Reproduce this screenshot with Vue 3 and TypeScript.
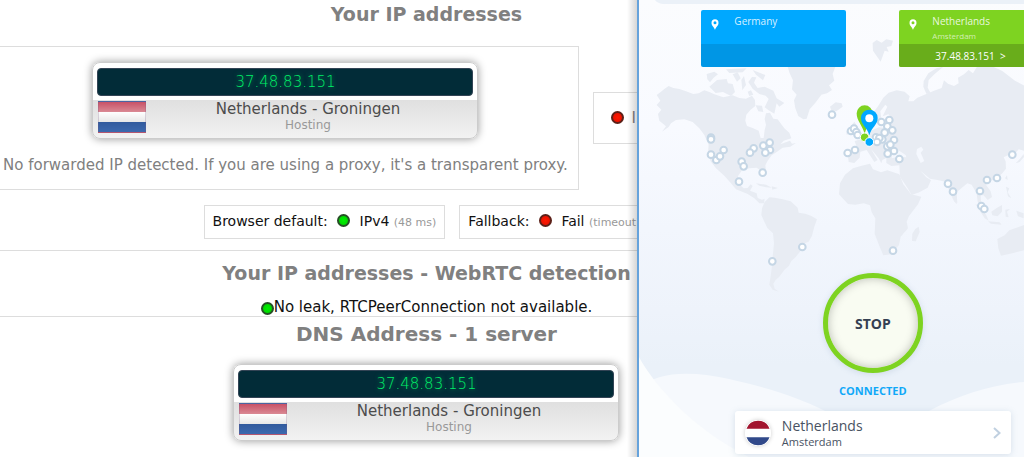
<script setup lang="ts">
interface Point { x: number; y: number }

const address = '37.48.83.151'

const toPoints = (pairs: number[][]): Point[] => pairs.map(([x, y]) => ({ x, y }))

const westServers = toPoints([
  [225, 233], [225, 238], [263, 270], [241, 300], [252, 289], [225, 284], [317, 305], [323, 319],
  [353, 265], [342, 278], [382, 257], [401, 248], [402, 270], [388, 278], [380, 338], [309, 365],
  [499, 561], [409, 604],
])

const eastServers = toPoints([
  [36, 164], [93, 213], [102, 206], [109, 216], [113, 225], [83, 279], [105, 270], [184, 186],
  [208, 180], [202, 199], [217, 211], [194, 218], [168, 232], [187, 238], [178, 234], [171, 246],
  [222, 240], [202, 259], [211, 254], [222, 273], [203, 281], [238, 297], [219, 572], [384, 371],
  [399, 395], [577, 284], [531, 354], [501, 360], [480, 393], [484, 438], [493, 447],
])
</script>

<template>
  <div class="desktop">
    <main class="page">
      <h2>Your IP addresses</h2>
      <div class="results">
        <section class="panel">
          <article class="card">
            <div class="address">{{ address }}</div>
            <div class="place">
              <span class="flag"></span>
              <div class="place-text">
                <strong>Netherlands - Groningen</strong>
                <small>Hosting</small>
              </div>
            </div>
          </article>
          <p>No forwarded IP detected. If you are using a proxy, it's a transparent proxy.</p>
        </section>
        <section class="panel v6"><span class="dot red"></span>IPv6</section>
      </div>

      <div class="modes">
        <div class="mode">Browser default: <span class="dot green"></span> IPv4 <small>(48 ms)</small></div>
        <div class="mode">Fallback: <span class="dot red"></span> Fail <small>(timeout)</small></div>
      </div>

      <section class="webrtc">
        <h2>Your IP addresses - WebRTC detection</h2>
        <p><span class="dot green"></span>No leak, RTCPeerConnection not available.</p>
      </section>

      <section class="dns">
        <h1>DNS Address - 1 server</h1>
        <article class="card">
          <div class="address">{{ address }}</div>
          <div class="place">
            <span class="flag"></span>
            <div class="place-text">
              <strong>Netherlands - Groningen</strong>
              <small>Hosting</small>
            </div>
          </div>
        </article>
      </section>
    </main>

    <aside class="vpn">
      <svg class="map" viewBox="0 0 386 457" preserveAspectRatio="xMinYMin slice" aria-hidden="true">
        <defs>
          <linearGradient id="sky" x1="0" y1="0" x2="0" y2="1">
            <stop offset="0" stop-color="#fbfcfe" />
            <stop offset=".28" stop-color="#f8faff" />
            <stop offset=".5" stop-color="#f2f6fd" />
            <stop offset=".68" stop-color="#eef3fb" />
            <stop offset=".8" stop-color="#eaf1f9" />
            <stop offset="1" stop-color="#eaf1f9" />
          </linearGradient>
        </defs>
        <rect width="386" height="457" fill="url(#sky)" />
        <path d="M16 0H386V4H24Q18 3 16 0Z" fill="#ebf1f8" />
        <path d="M0 388C18 372 50 370 90 379C130 388 160 398 186 411H290C320 395 355 384 386 382V457H0Z" fill="#f6f9fd" />
        <path d="M0 357C15 385 55 430 110 457H0Z" fill="#fbfdfe" />
        <g fill="#e8ecf3">
          <g transform="translate(-3 60) scale(.3333)">
            <path d="M62 105L74 96L85 87L98 78L112 84L130 87L150 94L172 102L188 100L205 91L222 97L235 103L262 112L290 106L310 114L330 116L348 107L357 120L358 138L343 150L331 164L328 182L333 198L350 204L368 212L374 234L383 234L386 210L390 195L386 177L390 160L402 158L412 176L425 178L436 193L445 205L460 218L466 235L443 242L433 253L462 242L468 251L480 249L463 260L440 263L422 276L407 286L395 302L388 316L391 340L386 347L377 334L362 323L340 325L318 331L306 348L308 371L323 385L335 384L344 373L350 378L342 392L362 400L365 414L378 419L386 416L384 430L370 430L355 415L335 402L300 388L285 370L265 347L240 325L224 304L216 278L218 254L205 225L190 205L170 186L145 178L120 180L105 190L98 201L78 215L90 199L70 182L66 162L76 149L62 135L73 122Z" />
            <path d="M212 42L235 35L246 43L233 53L222 67L214 58ZM220 80L243 60L272 57L276 70L290 72L297 96L285 108L261 96L239 99ZM290 43L305 37L314 55L303 65ZM316 60L324 48L330 75L319 91ZM337 66L348 51L361 52L354 68L365 84L386 80L412 92L422 115L445 129L430 140L422 130L415 161L398 151L386 142L398 117L389 107L370 102L350 86ZM350 30L388 45L381 61L360 44ZM359 136L378 137L382 156L367 154ZM270 28L332 25L320 37L280 39ZM335 95L345 91L352 104L340 108ZM360 370L390 374L408 383L390 382L370 377ZM407 379L426 384L409 389Z" />
            <path d="M455 20H598L590 42L595 62L579 76L588 90L573 100L556 104L540 126L521 148L512 176L502 178L487 168L478 145L474 121L482 104L468 88L471 61L461 40Z" />
            <path d="M710 -51L722 -60L737 -52L751 -62L771 -58L766 -42L752 -39L758 -25L746 -28L734 5L722 -12L711 -28Z" />
            <path d="M378 445L386 426L400 412L416 413L440 418L464 424L485 443L488 458L508 461L526 468L543 478L535 500L528 527L518 545L500 552L492 575L480 590L466 603L459 617L445 630L430 650L419 660L412 671L416 686L429 695L410 689L400 674L404 649L407 625L410 590L414 550L411 520L394 504L383 481L376 465Z" />
          </g>
          <g transform="translate(181 60) scale(.3333)">
            <path d="M162 170L161 156L174 139L190 113L206 98L230 91L254 95L269 109L265 124L280 124L292 113L321 101L342 92L365 84L372 61L384 71L402 78L416 70L414 53L432 43L446 30L459 40L471 20H520L547 33L585 62L618 80V274L596 268L581 286L564 286L551 292L557 304L558 326L547 340L531 355L510 363L498 374L512 394L516 411L503 420L491 406L482 406L483 424L493 444L485 446L473 425L470 400L455 374L442 370L425 384L410 397L412 429L402 424L390 398L378 366L357 361L330 356L301 332L319 352L333 361L323 383L298 397L275 405L263 385L240 350L238 316L214 318L199 309L199 294L187 300L184 310L176 295L153 267L173 300L163 306L140 270L121 275L119 293L103 309L86 306L82 273L112 267L104 243L125 237L143 225L156 211L177 202L196 204L205 195L194 185L198 171L212 169L205 163L188 169L202 140L196 134L181 154L185 183L177 195L169 182Z" />
            <path d="M99 325L125 317L150 311L159 328L183 337L202 331L238 343L250 373L273 403L304 410L294 433L267 468L260 485L264 505L242 530L237 555L214 583L190 586L179 560L164 521L166 475L155 457L150 436L131 430L106 434L84 432L57 403L60 370L75 344ZM286 507L296 500L299 516L287 544L276 543L277 521Z" />
            <path d="M30 140L47 127L65 130L68 140L49 154L34 151ZM93 198L103 185L111 197L123 229L105 231L101 213ZM79 214L92 207L91 221L80 224ZM310 80L311 63L325 40L349 25L370 20L344 42L326 60L323 83L334 103L319 101ZM618 493L594 502L568 511L554 526L532 537L535 565L543 587L577 580L618 569ZM514 455L530 444L546 435L546 455L533 469L517 466ZM466 432L483 441L499 466L506 482L494 475ZM504 484L539 487L545 494L513 491ZM556 449L570 447L561 455L566 472L557 470ZM589 452L611 460V475L594 469ZM558 380L568 385L563 397L574 415L564 409ZM555 355L561 346L563 360ZM587 310L600 296L611 282L612 291L599 306ZM402 423L410 423L410 433Z" />
            <path d="M216 280L234 270L257 285L259 292L236 290L215 295ZM291 267L304 260L310 269L302 278L313 303L302 309L289 282Z" fill="#f5f8fe" />
          </g>
        </g>
        <g class="servers" transform="translate(-3 60) scale(.3333)">
          <circle v-for="(p, i) in westServers" :key="i" :cx="p.x" :cy="p.y" r="10" />
        </g>
        <g class="servers" transform="translate(181 60) scale(.3333)">
          <circle v-for="(p, i) in eastServers" :key="i" :cx="p.x" :cy="p.y" r="10" />
        </g>
        <g transform="translate(181 60) scale(.3333)">
          <path d="M134 222C127 195 110 183 110 160A24 24 0 0 1 158 160C158 183 141 195 134 222Z" fill="#7ed321" />
          <circle cx="134" cy="232" r="13" fill="#7ed321" stroke="#fff" stroke-width="3" />
          <path d="M148 226C141 201 123 195 123 174A25 25 0 0 1 173 174C173 195 155 201 148 226Z" fill="#00a8ff" />
          <circle cx="148" cy="175" r="12" fill="#fff" />
          <circle cx="148" cy="246" r="13" fill="#00a8ff" stroke="#fff" stroke-width="3" />
        </g>
      </svg>

      <div class="vpn-content">
        <div class="routes">
          <button class="route blue" type="button">
            <span class="route-main">
              <svg viewBox="0 0 8 11"><path fill-rule="evenodd" d="M4 11C3.400 8 .5 6.800.5 3.900A3.500 3.700 0 0 1 7.500 3.900C7.500 6.800 4.600 8 4 11ZM4 2.300A1.500 1.500 0 1 0 4 5.300A1.500 1.500 0 0 0 4 2.300Z" /></svg>
              <span class="route-name">Germany</span>
            </span>
            <span class="route-ip"></span>
          </button>
          <button class="route lime" type="button">
            <span class="route-main">
              <svg viewBox="0 0 8 11"><path fill-rule="evenodd" d="M4 11C3.400 8 .5 6.800.5 3.900A3.500 3.700 0 0 1 7.500 3.900C7.500 6.800 4.600 8 4 11ZM4 2.300A1.500 1.500 0 1 0 4 5.300A1.500 1.500 0 0 0 4 2.300Z" /></svg>
              <span class="route-name">Netherlands<small>Amsterdam</small></span>
            </span>
            <span class="route-ip">{{ address }}&nbsp; &gt;</span>
          </button>
        </div>

        <div class="control">
          <button class="stop" type="button">STOP</button>
          <div class="status">CONNECTED</div>
          <button class="location" type="button">
            <svg class="round-flag" viewBox="0 0 26 26" aria-hidden="true">
              <circle cx="13" cy="13" r="13" fill="#fff" />
              <path d="M1.500 8.700A12.300 12.300 0 0 1 24.500 8.700Z" fill="#a2152f" />
              <path d="M1.500 17.300A12.300 12.300 0 0 0 24.500 17.300Z" fill="#31498a" />
            </svg>
            <span class="location-text">Netherlands<small>Amsterdam</small></span>
            <svg class="chevron" viewBox="0 0 8 12" aria-hidden="true"><path d="M1 1L6.500 6L1 11" /></svg>
          </button>
        </div>
      </div>
    </aside>
  </div>
</template>

<style>
body { margin: 0; background: #fff; }
</style>

<style scoped>
* { box-sizing: border-box; }
.desktop {
  position: relative;
  min-height: 100vh;
  overflow: hidden;
  font-family: "DejaVu Sans", Verdana, sans-serif;
}
.page {
  width: 83.3%;
  color: #111;
  font-size: 15px;
  line-height: 20px;
}
h1, h2 {
  margin: 0;
  text-align: center;
  white-space: nowrap;
  color: #808080;
  font-size: 19px;
  line-height: 28px;
}
h1 { font-size: 20px; line-height: 34px; }
p { margin: 0; white-space: nowrap; text-align: center; }
small { font-size: 11px; color: #999; }
.results {
  display: flex;
  justify-content: center;
  align-items: center;
  gap: 14px;
  margin: 18px -12px 0;
}
.panel {
  flex: none;
  width: 588px;
  padding: 15px 8px 14px;
  border: 1px solid #ddd;
  color: #808080;
}
.panel p { margin-top: 16px; }
.panel .card { margin-left: 92px; }
.v6 { width: 268px; padding: 15px 14px; }
.v6 .dot { margin-right: 7px; }
.card {
  width: 386px;
  margin: 0 auto;
  padding: 5px 4px 4px;
  border: 1px solid #ccc;
  border-radius: 8px;
  background: linear-gradient(#fff 0 50%, #e0e0e0 50%, #f2f2f2);
  box-shadow: 0 0 8px rgba(0, 0, 0, .4);
}
.address {
  height: 28px;
  border: 1px solid #345;
  border-radius: 4px;
  background: #022c38;
  color: #00f068;
  text-align: center;
  text-shadow: 0 0 5px #00a050;
  font-family: "DejaVu Sans Light", "DejaVu Sans", sans-serif;
  font-weight: 200;
  font-size: 15px;
  line-height: 27px;
}
.place {
  display: flex;
  gap: 6px;
  height: 38px;
  padding: 5px 10px 0 1px;
}
.flag {
  width: 48px;
  height: 32px;
  border: 1px solid rgba(120, 90, 130, .25);
  background: linear-gradient(#c85267, #d98792 32%, #fff 33%, #e8e8e8 65%, #315a9d 66%, #3c69ae);
}
.place-text {
  flex: 1;
  display: flex;
  flex-direction: column;
  align-items: center;
}
.place-text strong { font-weight: 400; line-height: 17px; color: #4c4c4c; }
.place-text small { font-size: 12px; line-height: 15px; }
.modes {
  display: flex;
  justify-content: center;
  gap: 14px;
  margin-top: 15px;
  white-space: nowrap;
  font-size: 14px;
}
.mode { height: 34px; padding: 5px 8px; border: 1px solid #ddd; }
.dot {
  display: inline-block;
  width: 13px;
  height: 13px;
  margin: 0 5px;
  vertical-align: -1px;
  border: 2px solid #444;
  border-radius: 50%;
}
.v6 .dot { margin-left: 3px; }
.green { background: radial-gradient(#00f000, #00cf00); border-color: #254f25; }
.red { background: radial-gradient(#ff1800, #e01000); border-color: #5c2018; }
.webrtc, .dns { border-top: 1px solid #ddd; }
.webrtc { margin-top: 11px; padding-top: 8px; }
.webrtc p { height: 17px; margin-top: 12px; line-height: 16px; }
.webrtc .dot { margin: 0; vertical-align: -3px; }
.dns .card { margin-top: 13px; }

.vpn {
  position: absolute;
  top: 0;
  right: 0;
  bottom: 0;
  width: 37.8%;
  overflow: hidden;
  border-left: 2px solid #66a3dc;
  background: #f8fafe;
  font-family: "Open Sans", "Noto Sans", sans-serif;
}
.desktop::after {
  content: "";
  position: absolute;
  top: 0;
  bottom: 0;
  right: 37.8%;
  width: 10px;
  background: linear-gradient(to right, transparent, rgba(0, 0, 0, .16));
}
.map { position: absolute; inset: 0; width: 100%; height: 100%; }
.servers circle { fill: #fff; stroke: #c5d6e5; stroke-width: 6; }
.vpn-content {
  position: relative;
  display: flex;
  flex-direction: column;
  justify-content: space-between;
  align-items: center;
  width: 121.5%;
  min-height: 100vh;
  padding: 10px 0 3px;
}
button { padding: 0; border: 0; font: inherit; cursor: pointer; }
.routes { display: flex; gap: 53px; }
.route {
  display: flex;
  flex-direction: column;
  width: 145px;
  border-radius: 2px;
  overflow: hidden;
  color: rgba(255, 255, 255, .85);
  text-align: left;
  font-size: 10px;
}
.route-main { display: flex; gap: 15px; height: 34px; padding-left: 10px; }
.route-main svg { width: 8px; height: 11px; margin-top: 9px; fill: #fff; }
.route-name { line-height: 22px; }
.route-name small { display: block; font-size: 8px; line-height: 8px; color: rgba(255, 255, 255, .65); }
.route-ip { width: 100%; height: 23px; padding-left: 36px; line-height: 24px; color: #fff; background: rgba(0, 0, 0, .1); }
.blue { background: #00a8ff; }
.lime { background: #7ed321; }
.lime .route-ip { background: #69ad1b; }
.control { display: flex; flex-direction: column; align-items: center; }
.stop {
  width: 100px;
  height: 100px;
  border: 5px solid #7ed321;
  border-radius: 50%;
  background: #f9fcf2;
  box-shadow: inset 0 0 10px rgba(0, 0, 0, .25), 0 1px 6px rgba(100, 130, 160, .2);
  color: #354052;
  font-size: 14px;
  font-weight: 700;
}
.status { margin-top: 9px; color: #10a8f8; font-size: 11px; font-weight: 700; line-height: 18px; }
.location {
  display: flex;
  align-items: center;
  width: 276px;
  height: 43px;
  margin-top: 11px;
  padding: 0 10px;
  border-radius: 3px;
  background: #fff;
  box-shadow: 0 1px 6px rgba(120, 150, 180, .25);
  text-align: left;
}
.round-flag { width: 26px; height: 26px; border-radius: 50%; box-shadow: 0 0 4px rgba(0, 0, 0, .2); }
.location-text { flex: 1; margin-left: 11px; color: #485262; font-size: 14px; line-height: 18px; }
.location-text small { display: block; color: #485262; font-size: 11px; line-height: 14px; }
.chevron { width: 8px; height: 12px; fill: none; stroke: #c0d0e0; stroke-width: 2; }
</style>
